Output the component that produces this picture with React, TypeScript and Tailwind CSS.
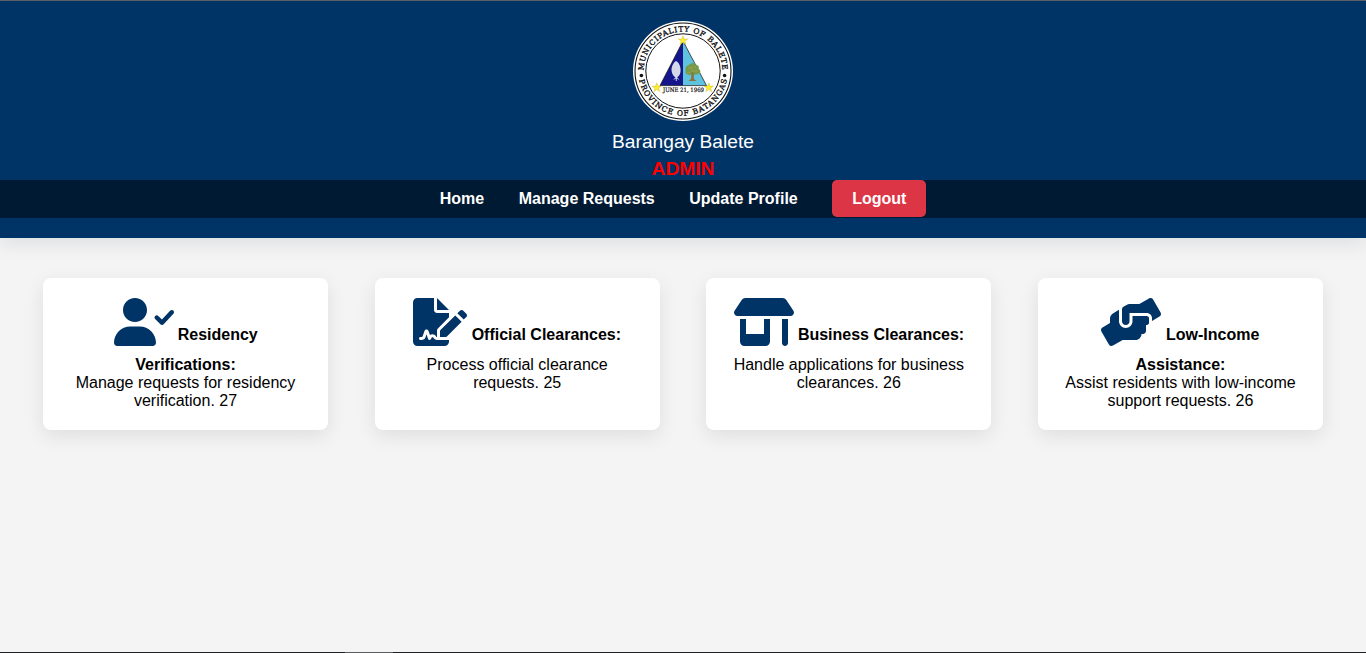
import type { ReactNode } from "react";
import { FaShop } from "react-icons/fa6";
import { FaHandsHelping } from "react-icons/fa";

const STAR = "M0-4.8 1.2-1.5 4.7-1.5 1.9.6 2.9 4 0 2-2.9 4-1.9.6-4.7-1.5-1.2-1.5Z";

function Seal() {
  return (
    <svg viewBox="0 0 100 100" className="block h-[100px] w-[100px]">
      <defs>
        <path id="seal-top" d="M10.6 50A39.4 39.4 0 0 1 89.4 50" />
        <path id="seal-bottom" d="M5.2 50A44.8 44.8 0 0 0 94.8 50" />
      </defs>
      <circle cx="50" cy="50" r="50" fill="#fff" />
      <circle cx="50" cy="50" r="48" fill="none" stroke="#111" strokeWidth="1.1" />
      <circle cx="50" cy="50" r="37.2" fill="none" stroke="#111" strokeWidth="1" />
      <g fill="#111" fontFamily="'DejaVu Serif', serif" fontSize="7.4" stroke="#111" strokeWidth="0.35">
        <text>
          <textPath href="#seal-top" startOffset="0.5" textLength="122" lengthAdjust="spacing">
            MUNICIPALITY OF BALETE
          </textPath>
        </text>
        <text>
          <textPath href="#seal-bottom" startOffset="9" textLength="123" lengthAdjust="spacing">
            PROVINCE OF BATANGAS
          </textPath>
        </text>
      </g>
      <circle cx="8.4" cy="54.5" r="1.8" fill="#111" />
      <circle cx="91.6" cy="54.5" r="1.8" fill="#111" />
      <path d="M50 20V64.6H27Z" fill="#15158c" />
      <path d="M50 20V64.6H73.5Z" fill="#5fc3e0" />
      <path d="M50 20 73.5 64.6H27Z" fill="none" stroke="#111" strokeWidth="0.7" />
      <path d="M43 40C40 42 38.3 46 38.6 50 39 53.5 41 55.5 42.4 56.2L40 59.2 42.8 57.6V60H43.8V57.6L46.5 59.2 44.2 56.2C46.6 55 47.8 52 47.6 48.5 47.4 44.500 45.5 41 43 40Z" fill="#d5d8e8" />
      <path d="M56 44C57 42 61.5 41.7 62.5 43.6 65.5 44 66.5 46.5 65.6 48 68.2 49 68 53 65 52.8 62.5 54.5 60 53 57.6 53.8 54.5 54.4 51.5 52.5 52.8 49.5 51.8 47 53.5 44.5 56 44Z" fill="#729b4a" />
      <path d="M55 47H60M58 50H65M54 51.5H57M61 46H63" stroke="#9a9a4b" strokeWidth="1.4" />
      <path d="M58.5 51.5H60.5L61 58 63.5 60H55.5L58 58Z" fill="#8a713d" />
      <text x="30" y="70.6" textLength="41" lengthAdjust="spacingAndGlyphs" fill="#111" stroke="#111" strokeWidth="0.2" fontFamily="'DejaVu Serif', serif" fontSize="6">
        JUNE 21, 1969
      </text>
      <g fill="#ffee2b" stroke="#a69a1c" strokeWidth="0.3">
        <path d={STAR} transform="translate(50 19.5)" />
        <path d={STAR} transform="translate(23.8 66.6)" />
        <path d={STAR} transform="translate(75.8 66.6)" />
      </g>
    </svg>
  );
}

const iconBase = "mb-[10px] inline-block h-12 align-[-16px] text-[#003366]";

function UserCheckIcon() {
  return (
    <svg viewBox="0 0 640 512" fill="currentColor" className={`${iconBase} -mr-[0.5px] ml-[0.5px] w-[60px]`}>
      <path d="M274.7 304H173.3C77.61 304 0 381.6 0 477.3C0 496.5 15.52 512 34.66 512h378.7C432.5 512 448 496.5 448 477.3C448 381.6 370.4 304 274.7 304zM224 256c70.7 0 128-57.31 128-128S294.7 0 224 0C153.3 0 96 57.31 96 128S153.3 256 224 256zM632.3 134.4c-9.703-9-24.91-8.453-33.92 1.266l-87.05 93.75l-38.39-38.39c-9.375-9.375-24.56-9.375-33.94 0s-9.375 24.56 0 33.94l56 56C499.5 285.5 505.6 288 512 288h.4375c6.531-.125 12.72-2.891 17.16-7.672l104-112C642.6 158.6 642 143.4 632.3 134.4z" />
    </svg>
  );
}

function FileSignatureIcon() {
  return (
    <svg viewBox="0 0 576 512" fill="currentColor" className={`${iconBase} w-[54px]`}>
      <path d="M292.7 342.3C289.7 345.3 288 349.4 288 353.7V416h62.34c4.264 0 8.35-1.703 11.35-4.727l156.9-158l-67.88-67.88L292.7 342.3zM568.5 167.4L536.6 135.5c-9.875-10-26-10-36 0l-27.25 27.25l67.88 67.88l27.25-27.25C578.5 193.4 578.5 177.3 568.5 167.4zM256 0v128h128L256 0zM256 448c-16.07-.2852-30.62-9.359-37.88-23.88c-2.875-5.875-8-6.5-10.12-6.5s-7.25 .625-10 6.125l-7.749 15.38C187.6 444.6 181.1 448 176 448H174.9c-6.5-.5-12-4.75-14-11L144 386.6L133.4 418.5C127.5 436.1 111 448 92.45 448H80C71.13 448 64 440.9 64 432S71.13 416 80 416h12.4c4.875 0 9.102-3.125 10.6-7.625l18.25-54.63C124.5 343.9 133.6 337.3 144 337.3s19.5 6.625 22.75 16.5l13.88 41.63c19.75-16.25 54.13-9.75 66 14.12C248.5 413.2 252.2 415.6 256 415.9V347c0-8.523 3.402-16.7 9.451-22.71L384 206.5V160H256c-17.67 0-32-14.33-32-32L224 0H48C21.49 0 0 21.49 0 48v416C0 490.5 21.49 512 48 512h288c26.51 0 48-21.49 48-48V448H256z" />
    </svg>
  );
}

function Card({ icon, children }: { icon: ReactNode; children: ReactNode }) {
  return (
    <article className="h-[152px] w-[285px] rounded-lg bg-white p-5 text-center text-base leading-[18px] whitespace-nowrap text-black shadow-[0_6px_20px_rgba(0,0,0,0.09)]">
      {icon} {children}
    </article>
  );
}

export default function App() {
  return (
    <div className="flex h-[653px] flex-col overflow-hidden bg-[#f4f4f4] font-['Liberation_Sans',Arial,sans-serif]">
      <div className="h-px shrink-0 bg-[#5f6368]" />
      <header className="flex h-[237px] shrink-0 flex-col items-center bg-[#003366] pt-5 shadow-[0_4px_20px_rgba(0,30,60,0.11)]">
        <Seal />
        <div className="mt-[10px] text-[19.2px] leading-[22px] text-white">Barangay Balete</div>
        <div className="mt-[5px] h-[22px] text-[19.2px] leading-[22px] font-bold text-[#ff0000]">ADMIN</div>
        <nav className="flex h-[38px] w-full items-start justify-center bg-[#001a33] text-base font-bold text-white">
          <a className="mr-[34.5px] leading-[37px]">Home</a>
          <a className="mr-[34.5px] leading-[37px]">Manage Requests</a>
          <a className="mr-[34.5px] leading-[37px]">Update Profile</a>
          <button className="h-[37px] w-[94px] rounded-[5px] bg-[#dc3545] leading-[37px]">Logout</button>
        </nav>
      </header>
      <main className="flex flex-1 items-start justify-between px-[43px] pt-10">
        <Card icon={<UserCheckIcon />}>
          <b>
            Residency
            <br />
            Verifications:
          </b>
          <br />
          Manage requests for residency
          <br />
          verification. 27
        </Card>
        <Card icon={<FileSignatureIcon />}>
          <b>Official Clearances:</b>
          <br />
          Process official clearance
          <br />
          requests. 25
        </Card>
        <Card icon={<FaShop className={`${iconBase} -mr-[0.5px] ml-[0.5px] w-[60px]`} />}>
          <b>Business Clearances:</b>
          <br />
          Handle applications for business
          <br />
          clearances. 26
        </Card>
        <Card icon={<FaHandsHelping className={`${iconBase} -ml-[0.5px] mr-[0.5px] w-[60px]`} />}>
          <b>
            Low-Income
            <br />
            Assistance:
          </b>
          <br />
          Assist residents with low-income
          <br />
          support requests. 26
        </Card>
      </main>
      <div className="flex h-px shrink-0 bg-[#202124]">
        <div className="ml-[345px] w-12 bg-[#5b5c5e]" />
      </div>
    </div>
  );
}
